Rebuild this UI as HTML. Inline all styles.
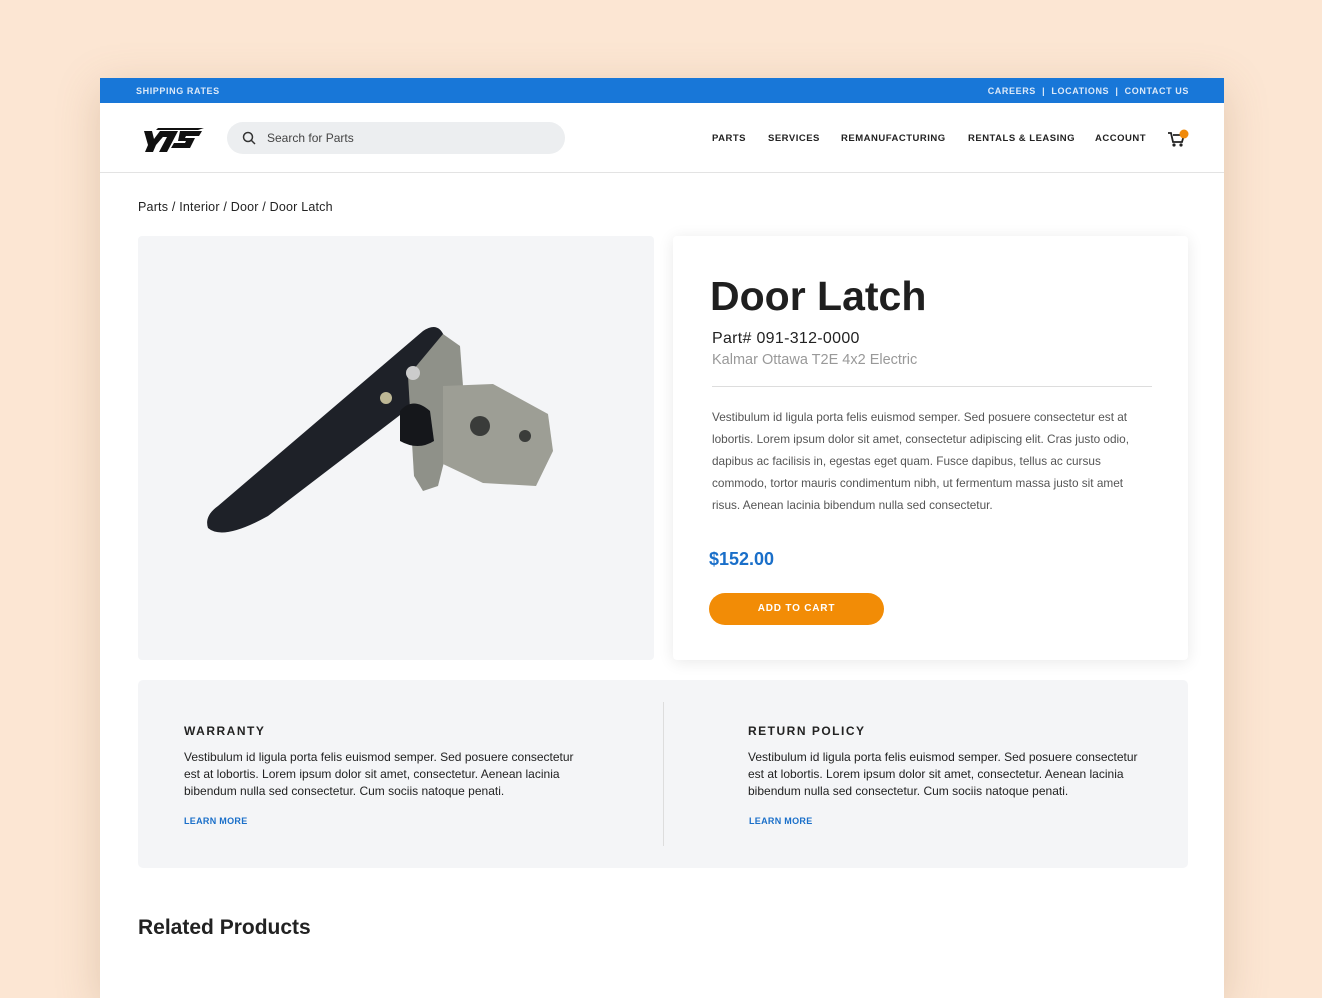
<!DOCTYPE html>
<html><head><meta charset="utf-8"><style>
*{margin:0;padding:0;box-sizing:border-box}
body{width:1322px;height:976px;overflow:hidden;background:#fce6d3;font-family:"Liberation Sans",sans-serif;position:relative}
.page{position:absolute;left:100px;top:78px;width:1124px;height:920px;background:#fff;box-shadow:0 10px 40px rgba(150,110,70,.25)}
.top{height:25px;background:#1877d8;color:#dce9f8;font-size:9px;font-weight:bold;letter-spacing:.6px;position:relative}
.top span{position:absolute;top:8px}
.hdr{height:70px;border-bottom:1px solid #e3e3e3;position:relative}
.search{position:absolute;left:127px;top:19px;width:338px;height:32px;border-radius:16px;background:#eceef0;font-size:12px;color:#444;padding:9px 0 0 40px}
.nav{position:absolute;top:30px;font-size:9.5px;font-weight:bold;letter-spacing:.5px;color:#222}
.a{position:absolute}
p.d{font-size:11.8px;line-height:22px;color:#555}
.box p{font-size:12px;line-height:17px;color:#222}
.lm{font-size:9px;font-weight:bold;color:#1a6fc9;letter-spacing:.3px}
h4{font-size:12px;letter-spacing:1.5px;color:#222}
</style></head><body>
<div class="page">
<div class="top"><span style="left:36px">SHIPPING RATES</span><span style="right:35px">CAREERS &nbsp;| &nbsp;LOCATIONS &nbsp;| &nbsp;CONTACT US</span></div>
<div class="hdr">
<svg class="a" style="left:38px;top:20px" width="66" height="30" viewBox="0 0 66 30"><path d="M6 8h8l2 8 6-8h8L18 22l-3 7H7l3-7z M28 8h12l-11 21h-8l8-15h-4z M42 8h22l-3 5H48l-1 2h10l-5 10H33l3-5h11l1-2H40z M20 5h46l-6 2H18z" fill="#111"/></svg>
<div class="search"><svg class="a" style="left:15px;top:9px" width="14" height="14" viewBox="0 0 14 14"><circle cx="6" cy="6" r="4.5" fill="none" stroke="#333" stroke-width="1.5"/><path d="M9.5 9.5l3.5 3.5" stroke="#333" stroke-width="1.5"/></svg>Search for Parts</div>
<span class="nav" style="left:612px">PARTS</span><span class="nav" style="left:668px">SERVICES</span><span class="nav" style="left:741px">REMANUFACTURING</span><span class="nav" style="left:868px">RENTALS &amp; LEASING</span><span class="nav" style="left:995px">ACCOUNT</span>
<svg class="a" style="left:1067px;top:24px" width="24" height="22" viewBox="0 0 24 22"><path d="M1 6h3l2 9h9l2-7H6" fill="none" stroke="#222" stroke-width="1.8"/><circle cx="7" cy="18" r="1.6" fill="#222"/><circle cx="14" cy="18" r="1.6" fill="#222"/><circle cx="17" cy="7" r="4.5" fill="#f08a0a"/></svg>
</div>
<div class="a" style="left:38px;top:122px;font-size:12.5px;color:#222;letter-spacing:.2px">Parts / Interior / Door / Door Latch</div>
<div class="a" style="left:38px;top:158px;width:516px;height:424px;background:#f4f5f7;border-radius:4px">
<svg width="516" height="424" viewBox="0 0 516 424">
<path d="M70 292 Q66 280 80 270 L285 95 Q300 85 306 100 L300 150 L130 280 Q85 305 70 292Z" fill="#1e2128"/>
<path d="M270 140 L305 98 L322 110 L325 150 L300 250 L285 255 L276 240Z" fill="#8f9189"/>
<path d="M305 150 L355 148 L410 178 L415 215 L398 250 L345 247 L305 228Z" fill="#9d9e95"/>
<path d="M262 175 Q275 160 292 175 L296 205 Q280 215 262 205Z" fill="#15171b"/>
<circle cx="342" cy="190" r="10" fill="#3a3c3a"/><circle cx="387" cy="200" r="6" fill="#3a3c3a"/>
<circle cx="248" cy="162" r="6" fill="#bdb795"/><circle cx="275" cy="137" r="7" fill="#ccc"/>
</svg></div>
<div class="a" style="left:573px;top:158px;width:515px;height:424px;background:#fff;border-radius:4px;box-shadow:0 2px 16px rgba(0,0,0,.09)">
<div class="a" style="left:37px;top:37px;font-size:41px;font-weight:bold;color:#1f1f1f">Door Latch</div>
<div class="a" style="left:39px;top:94px;font-size:16px;color:#222;letter-spacing:.3px">Part# 091-312-0000</div>
<div class="a" style="left:39px;top:116px;font-size:14.5px;color:#999">Kalmar Ottawa T2E 4x2 Electric</div>
<div class="a" style="left:39px;top:150px;width:440px;height:1px;background:#ddd"></div>
<p class="d a" style="left:39px;top:170px;width:440px">Vestibulum id ligula porta felis euismod semper. Sed posuere consectetur est at lobortis. Lorem ipsum dolor sit amet, consectetur adipiscing elit. Cras justo odio, dapibus ac facilisis in, egestas eget quam. Fusce dapibus, tellus ac cursus commodo, tortor mauris condimentum nibh, ut fermentum massa justo sit amet risus. Aenean lacinia bibendum nulla sed consectetur.</p>
<div class="a" style="left:36px;top:313px;font-size:18px;font-weight:bold;color:#1a6fc9">$152.00</div>
<div class="a" style="left:36px;top:357px;width:175px;height:32px;border-radius:16px;background:#f28c06;color:#fff;font-size:10px;font-weight:bold;letter-spacing:.8px;text-align:center;line-height:32px">ADD TO CART</div>
</div>
<div class="a box" style="left:38px;top:602px;width:1050px;height:188px;background:#f4f5f7;border-radius:5px">
<h4 class="a" style="left:46px;top:44px">WARRANTY</h4>
<p class="a" style="left:46px;top:69px;width:400px">Vestibulum id ligula porta felis euismod semper. Sed posuere consectetur est at lobortis. Lorem ipsum dolor sit amet, consectetur. Aenean lacinia bibendum nulla sed consectetur. Cum sociis natoque penati.</p>
<div class="a lm" style="left:46px;top:136px">LEARN MORE</div>
<div class="a" style="left:525px;top:22px;width:1px;height:144px;background:#ddd"></div>
<h4 class="a" style="left:610px;top:44px">RETURN POLICY</h4>
<p class="a" style="left:610px;top:69px;width:400px">Vestibulum id ligula porta felis euismod semper. Sed posuere consectetur est at lobortis. Lorem ipsum dolor sit amet, consectetur. Aenean lacinia bibendum nulla sed consectetur. Cum sociis natoque penati.</p>
<div class="a lm" style="left:611px;top:136px">LEARN MORE</div>
</div>
<div class="a" style="left:38px;top:838px;font-size:21px;font-weight:bold;color:#222">Related Products</div>
</div>
</body></html>
